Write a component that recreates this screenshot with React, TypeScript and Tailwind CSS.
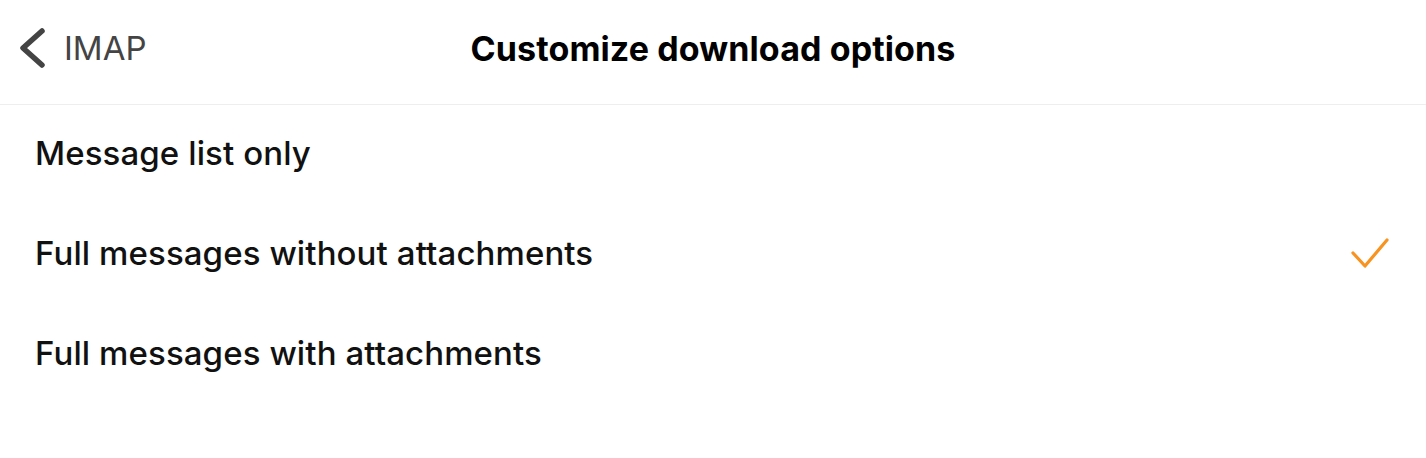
export default function App() {
  const options = [
    { label: "Message list only", checked: false },
    { label: "Full messages without attachments", checked: true },
    { label: "Full messages with attachments", checked: false },
  ];

  return (
    <div className="w-[1426px] h-[458px] bg-white font-['Inter',sans-serif] antialiased">
      {/* HEADER */}
      <div className="relative h-[105px] border-b border-[#eeeeee] flex items-center justify-center">
        <div className="absolute left-[18px] top-[27px] flex items-center gap-[18px] text-[#444444]">
          <svg width="28" height="42" viewBox="0 0 28 42" fill="none">
            <path d="M24 4 L5 21 L24 38" stroke="#444444" strokeWidth="5.5" strokeLinecap="round" strokeLinejoin="round" />
          </svg>
          <span className="text-[33px] leading-none">IMAP</span>
        </div>
        <h1 className="text-[34px] font-bold text-black -mt-[8px] tracking-[0.1px]">Customize download options</h1>
      </div>
      {/* OPTIONS */}
      <div className="flex flex-col">
        {options.map((o) => (
          <div key={o.label} className="h-[100px] flex items-center justify-between pl-[35px] pr-[36px]">
            <span className="text-[33px] font-medium text-[#111111] tracking-[0.1px] -mt-[2px]">{o.label}</span>
            {o.checked && (
              <svg width="40" height="34" viewBox="0 0 40 34" fill="none">
                <path d="M3 15 L15 28 L37 2" stroke="#F7931E" strokeWidth="3.2" strokeLinecap="round" strokeLinejoin="round" />
              </svg>
            )}
          </div>
        ))}
      </div>
    </div>
  );
}
